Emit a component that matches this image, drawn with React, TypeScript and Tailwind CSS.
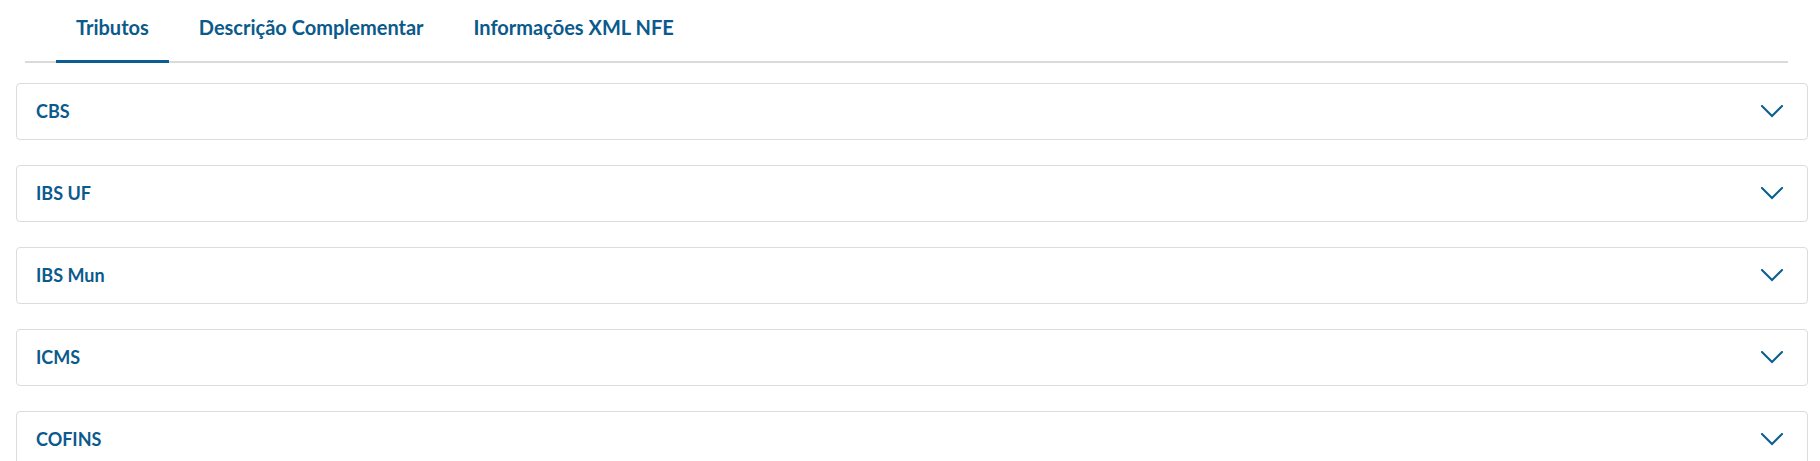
import React from "react";

const tabs = ["Tributos", "Descrição Complementar", "Informações XML NFE"];
const sections = ["CBS", "IBS UF", "IBS Mun", "ICMS", "COFINS"];

function Chevron() {
  return (
    <svg width="22" height="13" viewBox="0 0 22 13" fill="none">
      <polyline points="1,1 11,11 21,1" stroke="#0b5e91" strokeWidth="2" strokeLinecap="square" />
    </svg>
  );
}

export default function App() {
  return (
    <div className="w-[1820px] h-[461px] overflow-hidden bg-white" style={{ fontFamily: "Lato, 'Open Sans', sans-serif" }}>
      <div className="ml-[25px] mr-[32px] flex gap-[10px] pl-[31px] border-b-2 border-[#dadada] h-[63px]">
        {tabs.map((t, i) => (
          <div key={t} className="relative px-5 pt-[15px] text-[20px] leading-[24px] font-bold text-[#0b5a8c] whitespace-nowrap">
            {t}
            {i === 0 && <div className="absolute left-0 right-0 bottom-[-2px] h-[3px] bg-[#0b5e91]" />}
          </div>
        ))}
      </div>
      <div className="ml-4 mr-3 mt-[20px] flex flex-col gap-[25px]">
        {sections.map((s) => (
          <div key={s} className="h-[57px] border border-[#dcdcdc] rounded-[4px] flex items-center justify-between pl-[19px] pr-[24px]">
            <span className="text-[18px] font-bold text-[#0b5a8c]">{s}</span>
            <Chevron />
          </div>
        ))}
      </div>
    </div>
  );
}
